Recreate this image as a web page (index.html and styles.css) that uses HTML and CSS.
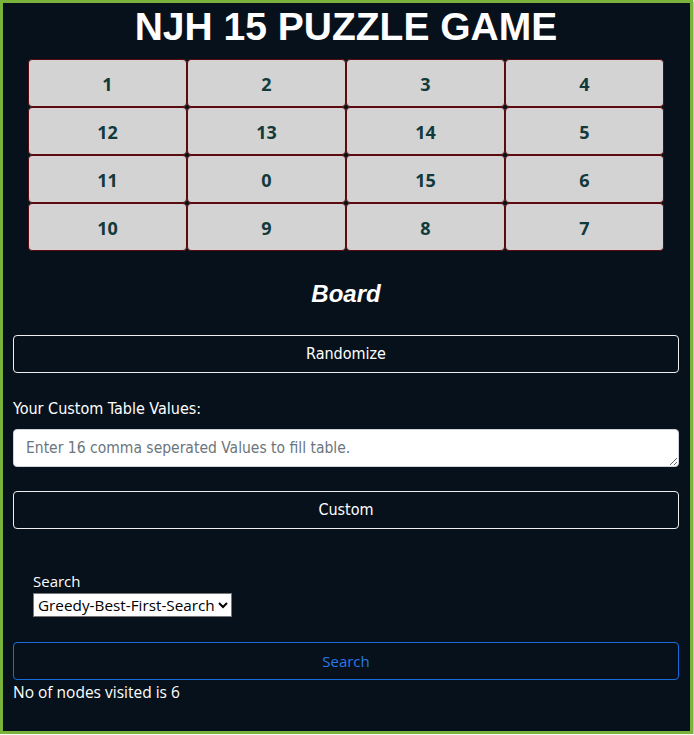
FILE: index.html
```html
<!DOCTYPE html>
<html lang="en">
<head>
<meta charset="utf-8">
<title>NJH 15 Puzzle Game</title>
<link rel="stylesheet" href="styles.css">
</head>
<body>
<div class="frame">
  <h1 class="title">NJH 15 PUZZLE GAME</h1>
  <div class="board">
    <div class="tile">1</div><div class="tile">2</div><div class="tile">3</div><div class="tile">4</div>
    <div class="tile">12</div><div class="tile">13</div><div class="tile">14</div><div class="tile">5</div>
    <div class="tile">11</div><div class="tile">0</div><div class="tile">15</div><div class="tile">6</div>
    <div class="tile">10</div><div class="tile">9</div><div class="tile">8</div><div class="tile">7</div>
  </div>
  <h2 class="caption">Board</h2>
  <button class="btn btn-light">Randomize</button>
  <label class="field-label" for="custom">Your Custom Table Values:</label>
  <textarea id="custom" class="input" rows="1" placeholder="Enter 16 comma seperated Values to fill table."></textarea>
  <button class="btn btn-light btn-custom">Custom</button>
  <div class="search-box">
    <label class="search-label" for="algo">Search</label>
    <select id="algo" class="select">
      <option>Greedy-Best-First-Search</option>
      <option>A-Star</option>
      <option>Breadth-First-Search</option>
    </select>
  </div>
  <button class="btn btn-primary">Search</button>
  <p class="result">No of nodes visited is 6</p>
</div>
</body>
</html>
```
FILE: styles.css
```css
html, body {
  margin: 0;
  padding: 0;
  background: #ffffff;
}
.frame {
  box-sizing: border-box;
  width: 693px;
  min-height: 734px;
  border: 3px solid #7ab33c;
  box-shadow: 1px 1px 2px rgba(0,0,0,0.35);
  background: #07111b;
  padding: 0 11px 20px 10px;
  color: #ffffff;
  font-family: "Open Sans", sans-serif;
}
.title {
  margin: 0 0 8px 0;
  text-align: center;
  font-family: "Liberation Sans", Arial, sans-serif;
  font-weight: 700;
  font-size: 39px;
  line-height: 48px;
  color: #ffffff;
}
.board {
  display: grid;
  grid-template-columns: repeat(4, 159px);
  grid-auto-rows: 48px;
  justify-content: center;
}
.tile {
  box-sizing: border-box;
  display: flex;
  align-items: center;
  justify-content: center;
  background: #d3d3d3;
  border: 1px solid #5c0a0e;
  border-radius: 4px;
  color: #123a3a;
  font-family: "Open Sans", sans-serif;
  font-weight: 700;
  font-size: 18px;
  padding-top: 1px;
}
.caption {
  margin: 28px 0 27px 0;
  text-align: center;
  font-family: "Liberation Sans", Arial, sans-serif;
  font-style: italic;
  font-weight: 700;
  font-size: 24px;
  line-height: 29px;
}
.btn {
  display: block;
  box-sizing: border-box;
  width: 100%;
  height: 38px;
  padding: 6px 12px;
  background: transparent;
  border-radius: 4px;
  font-size: 16px;
  line-height: 24px;
  cursor: pointer;
}
.btn-light {
  border: 1px solid #f0f0f0;
  color: #ffffff;
  font-family: "Liberation Sans Narrow", "DejaVu Sans Condensed", sans-serif;
}
.btn-custom {
  margin-top: 24px;
}
.field-label {
  display: block;
  margin: 24px 0 8px 0;
  font-family: "Liberation Sans Narrow", "DejaVu Sans Condensed", sans-serif;
  font-size: 16px;
  line-height: 24px;
}
.input {
  display: block;
  box-sizing: border-box;
  width: 100%;
  height: 38px;
  padding: 6px 12px;
  border: 1px solid #ced4da;
  border-radius: 4px;
  background: #ffffff;
  font-family: "Liberation Sans Narrow", "DejaVu Sans Condensed", sans-serif;
  font-size: 15.5px;
  line-height: 24px;
  resize: vertical;
}
.input::placeholder {
  color: #6c757d;
}
.search-box {
  padding: 41px 0 0 20px;
}
.search-label {
  display: block;
  font-size: 15px;
  line-height: 22px;
  margin-bottom: 1px;
}
.select {
  display: block;
  height: 24px;
  font-family: "Open Sans", sans-serif;
  font-size: 15.3px;
  color: #000000;
  background: #ffffff;
  border: 1px solid #767676;
  border-radius: 0;
}
.btn-primary {
  margin-top: 25px;
  border: 1px solid #1a6bdc;
  color: #2a78e4;
  font-family: "Open Sans", sans-serif;
  font-size: 15px;
}
.result {
  margin: 0;
  font-size: 15.5px;
  line-height: 24px;
}
```
